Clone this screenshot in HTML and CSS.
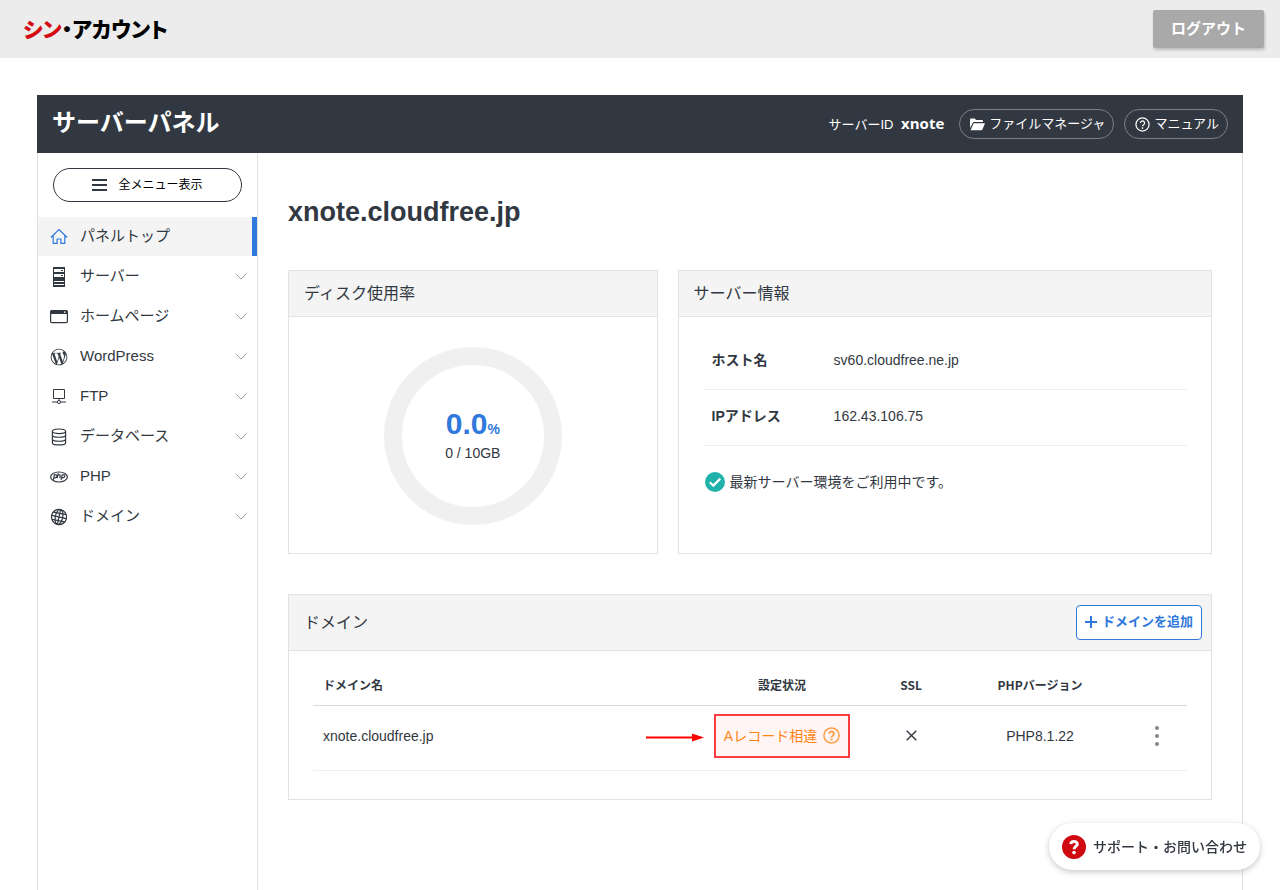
FILE: index.html
```html
<!DOCTYPE html>
<html lang="ja">
<head>
<meta charset="utf-8">
<meta name="viewport" content="width=device-width, initial-scale=1">
<title>サーバーパネル</title>
<link rel="stylesheet" href="styles.css">
</head>
<body>
<header class="site-header">
  <a class="logo" href="#"><span class="logo-accent">シン</span>・アカウント</a>
  <button class="logout" type="button">ログアウト</button>
</header>

<div class="panel">
  <header class="panel-header">
    <h1 class="panel-title">サーバーパネル</h1>
    <div class="panel-tools">
      <p class="server-id">サーバーID <strong>xnote</strong></p>
      <a class="pill" href="#">
        <svg width="15" height="13" viewBox="0 0 15 13" fill="currentColor" aria-hidden="true"><path d="M0 10V1.5Q0 .5 1 .5h3.600l1.500 1.500H12q1 0 1 1V4H4.300Q3 4 2.500 5.200z"/><path d="M.6 12.300 3.300 5.900Q3.600 5.200 4.400 5.200H15l-2.600 6.400q-.3.700-1 .7z"/></svg>
        ファイルマネージャ
      </a>
      <a class="pill" href="#">
        <svg width="15" height="15" viewBox="0 0 24 24" fill="none" stroke="currentColor" stroke-width="2" aria-hidden="true"><circle cx="12" cy="12" r="10.500"/><path d="M8.700 9.600a3.300 3.300 0 1 1 5.200 2.700c-1.200.8-1.900 1.300-1.900 2.500"/><path d="M12 16.500v2.400" stroke-width="2.400"/></svg>
        マニュアル
      </a>
    </div>
  </header>

  <div class="panel-body">
    <aside class="sidebar">
      <button class="all-menu" type="button">
        <svg width="15" height="12" viewBox="0 0 15 12" fill="#323841" aria-hidden="true"><path d="M0 0h15v2H0zM0 5h15v2H0zM0 10h15v2H0z"/></svg>
        全メニュー表示
      </button>
      <nav class="menu">
        <a class="menu-item is-active" href="#">
          <svg class="menu-icon" viewBox="0 0 18 20" fill="none" stroke="#2f78dc" stroke-width="1.200" aria-hidden="true"><path d="M.8 10.500 9 2.500l8.200 8M3.200 9v7.300h3.900v-4.300h3.800v4.300h3.900V9"/></svg>
          <span>パネルトップ</span>
        </a>
        <a class="menu-item" href="#">
          <svg class="menu-icon" viewBox="0 0 18 20" aria-hidden="true"><path fill="#323841" d="M3 0h12v20H3z"/><path fill="#fff" d="M4 2h10v3H4zM4 7h10v3H4zM4 14h10v1H4zM4 17h10v1H4z"/><path fill="#323841" d="M11 3h2v1h-2zM11 8h2v1h-2z"/></svg>
          <span>サーバー</span>
          <svg class="chevron" viewBox="0 0 12 7" aria-hidden="true"><path d="m.7.7 5.300 5.300L11.300.7"/></svg>
        </a>
        <a class="menu-item" href="#">
          <svg class="menu-icon" viewBox="0 0 18 20" aria-hidden="true"><rect x=".6" y="3.600" width="16.800" height="12" rx="1" fill="#fff" stroke="#323841" stroke-width="1.200"/><path fill="#323841" d="M1 3.500h16V7H1z"/><path fill="#fff" d="M14 4.500h1.500v1.300H14z"/></svg>
          <span>ホームページ</span>
          <svg class="chevron" viewBox="0 0 12 7" aria-hidden="true"><path d="m.7.7 5.300 5.300L11.300.7"/></svg>
        </a>
        <a class="menu-item" href="#">
          <svg class="menu-icon" viewBox="-1 -1 26 26" fill="#323841" aria-hidden="true"><path d="M21.469 6.825c.84 1.537 1.318 3.300 1.318 5.175 0 3.979-2.156 7.456-5.363 9.325l3.295-9.527c.615-1.540.82-2.771.82-3.864 0-.405-.026-.78-.07-1.110m-7.981.105c.647-.03 1.232-.105 1.232-.105.582-.075.514-.93-.067-.899 0 0-1.755.135-2.880.135-1.064 0-2.850-.15-2.850-.15-.585-.03-.661.855-.075.885 0 0 .54.061 1.125.09l1.680 4.605-2.370 7.080L5.354 6.900c.649-.03 1.234-.1 1.234-.1.585-.075.516-.93-.065-.896 0 0-1.746.138-2.874.138-.2 0-.438-.008-.69-.015C4.911 3.150 8.235 1.215 12 1.215c2.809 0 5.365 1.072 7.286 2.833-.046-.003-.091-.009-.141-.009-1.060 0-1.812.923-1.812 1.914 0 .89.513 1.643 1.060 2.531.411.72.89 1.643.89 2.977 0 .915-.354 1.994-.821 3.479l-1.075 3.585-3.900-11.610zM12 22.784c-1.059 0-2.081-.153-3.048-.437l3.237-9.406 3.315 9.087c.024.053.05.101.078.149-1.120.393-2.325.609-3.582.609M1.211 12c0-1.564.336-3.050.935-4.390L7.290 21.709C3.694 19.960 1.212 16.271 1.211 12M12 0C5.385 0 0 5.385 0 12s5.385 12 12 12 12-5.385 12-12S18.615 0 12 0"/></svg>
          <span>WordPress</span>
          <svg class="chevron" viewBox="0 0 12 7" aria-hidden="true"><path d="m.7.7 5.300 5.300L11.300.7"/></svg>
        </a>
        <a class="menu-item" href="#">
          <svg class="menu-icon" viewBox="0 0 18 20" fill="none" stroke="#323841" aria-hidden="true"><path d="M3.500 2.500h11v9h-11zM9 11.500v2M2 15h5.300M10.700 15H16"/><circle cx="9" cy="15" r="1.600"/></svg>
          <span>FTP</span>
          <svg class="chevron" viewBox="0 0 12 7" aria-hidden="true"><path d="m.7.7 5.300 5.300L11.300.7"/></svg>
        </a>
        <a class="menu-item" href="#">
          <svg class="menu-icon" viewBox="0 0 18 18" fill="none" stroke="#323841" stroke-width="1.200" aria-hidden="true"><ellipse cx="9" cy="3.300" rx="6.600" ry="2.300"/><path d="M2.400 3.300v11.400c0 3 13.200 3 13.200 0V3.300M2.400 7c0 3 13.200 3 13.200 0M2.400 11c0 3 13.200 3 13.200 0"/></svg>
          <span>データベース</span>
          <svg class="chevron" viewBox="0 0 12 7" aria-hidden="true"><path d="m.7.7 5.300 5.300L11.300.7"/></svg>
        </a>
        <a class="menu-item" href="#">
          <svg class="menu-icon" viewBox="0 0 18 18" fill="none" stroke="#323841" stroke-width="1.200" aria-hidden="true"><ellipse cx="9" cy="9" rx="8.400" ry="5"/><path d="m3.300 11.800 1.200-5h1.400c2 0 1.200 3-1 3H4.200M8.300 5.300 7.200 10M8 6.900h1.400c1 0 .9.600.7 1.400L9.700 10M11 11.800l1.200-5h1.400c2 0 1.200 3-1 3h-.7"/></svg>
          <span>PHP</span>
          <svg class="chevron" viewBox="0 0 12 7" aria-hidden="true"><path d="m.7.7 5.300 5.300L11.300.7"/></svg>
        </a>
        <a class="menu-item" href="#">
          <svg class="menu-icon" viewBox="0 0 18 18" fill="none" stroke="#323841" stroke-width="1.200" aria-hidden="true"><g transform="rotate(12 9 9)"><circle cx="9" cy="9" r="7.600"/><ellipse cx="9" cy="9" rx="3.700" ry="7.600"/><path d="M9 1.500v15M1.500 9h15M2.600 5.300h12.800M2.600 12.700h12.800"/></g></svg>
          <span>ドメイン</span>
          <svg class="chevron" viewBox="0 0 12 7" aria-hidden="true"><path d="m.7.7 5.300 5.300L11.300.7"/></svg>
        </a>
      </nav>
    </aside>

    <main class="content">
      <h2 class="domain-title">xnote.cloudfree.jp</h2>

      <div class="cards">
        <section class="card">
          <h3 class="card-head">ディスク使用率</h3>
          <div class="usage">
            <svg class="usage-ring" viewBox="0 0 178 178" aria-hidden="true"><circle cx="89" cy="89" r="80" fill="none" stroke="#f0f0f0" stroke-width="18"/></svg>
            <div class="usage-label">
              <p class="usage-value">0.0<span class="usage-unit">%</span></p>
              <p class="usage-total">0 / 10GB</p>
            </div>
          </div>
        </section>

        <section class="card">
          <h3 class="card-head">サーバー情報</h3>
          <div class="info">
            <table class="info-table">
              <tr><th scope="row">ホスト名</th><td>sv60.cloudfree.ne.jp</td></tr>
              <tr><th scope="row">IPアドレス</th><td>162.43.106.75</td></tr>
            </table>
            <p class="info-status">
              <svg width="20" height="20" viewBox="0 0 20 20" aria-hidden="true"><circle cx="10" cy="10" r="10" fill="#20b2aa"/><path d="m4.800 10.300 3.500 3.300 7-7" fill="none" stroke="#fff" stroke-width="2.200"/></svg>
              最新サーバー環境をご利用中です。
            </p>
          </div>
        </section>
      </div>

      <section class="card">
        <div class="card-head card-head-tall">
          <h3 class="card-title">ドメイン</h3>
          <button class="add-domain" type="button">
            <svg width="12" height="12" viewBox="0 0 12 12" fill="currentColor" aria-hidden="true"><path d="M5 0h2v5h5v2H7v5H5V7H0V5h5z"/></svg>
            ドメインを追加
          </button>
        </div>
        <div class="domains">
          <table class="domain-table">
            <colgroup><col><col class="col-wide"><col class="col-ssl"><col class="col-wide"><col class="col-menu"></colgroup>
            <thead>
              <tr><th class="col-name" scope="col">ドメイン名</th><th scope="col">設定状況</th><th scope="col">SSL</th><th scope="col">PHPバージョン</th><td></td></tr>
            </thead>
            <tbody>
              <tr>
                <td class="col-name">xnote.cloudfree.jp</td>
                <td>
                  <div class="status">
                    <svg class="status-arrow" width="58" height="9" viewBox="0 0 58 9" aria-hidden="true"><path fill="#f00" d="M0 3.500h46V.5l12 4-12 4v-3H0z"/></svg>
                    <a class="status-link" href="#">Aレコード相違
                      <svg width="17" height="17" viewBox="0 0 24 24" fill="none" stroke="#ffa24d" stroke-width="2.200" aria-hidden="true"><circle cx="12" cy="12" r="10.700"/><path d="M8.700 9.600a3.300 3.300 0 1 1 5.200 2.700c-1.200.8-1.900 1.300-1.900 2.500" stroke-width="2.800"/><path d="M12 16.300v2.700" stroke-width="3"/></svg>
                    </a>
                  </div>
                </td>
                <td><svg class="ssl-icon" width="11" height="11" viewBox="0 0 11 11" role="img" aria-label="未設定"><path d="m.7.7 9.600 9.600M10.300.7.7 10.300" stroke="#323841" stroke-width="1.400"/></svg></td>
                <td>PHP8.1.22</td>
                <td><button class="more" type="button" aria-label="操作"><svg width="4" height="20" viewBox="0 0 4 20" fill="#888" aria-hidden="true"><circle cx="2" cy="2" r="2"/><circle cx="2" cy="10" r="2"/><circle cx="2" cy="18" r="2"/></svg></button></td>
              </tr>
            </tbody>
          </table>
        </div>
      </section>
    </main>
  </div>
</div>

<a class="support" href="#">
  <svg width="24" height="24" viewBox="0 0 24 24" aria-hidden="true"><circle cx="12" cy="12" r="12" fill="#cf0a10"/><path d="M8.800 9.200c.2-3.600 6.600-3.500 6.500-.1-.1 2.300-3.200 2.300-3.200 5.100" fill="none" stroke="#fff" stroke-width="2.900"/><circle cx="12" cy="17.600" r="1.800" fill="#fff"/></svg>
  サポート・お問い合わせ
</a>
</body>
</html>
```

FILE: styles.css
```css
*,
*::before,
*::after {
  box-sizing: border-box;
}

body {
  margin: 0;
  min-height: 100vh;
  display: flex;
  flex-direction: column;
  background: #fff;
  color: #323841;
  font: 14px/20px "Liberation Sans", "Noto Sans CJK JP", sans-serif;
}

h1, h2, h3, p {
  margin: 0;
}

a {
  color: inherit;
  text-decoration: none;
}

button {
  font: inherit;
  color: inherit;
  cursor: pointer;
}

svg {
  display: block;
  flex: none;
}

table {
  width: 100%;
  border-collapse: collapse;
}

/* Site header */
.site-header {
  display: flex;
  align-items: center;
  justify-content: space-between;
  height: 58px;
  padding: 0 16px 0 23px;
  background: #ececec;
}

.logo {
  padding-bottom: 3px;
  color: #000;
  font: 900 21px/30px "Noto Sans CJK JP", sans-serif;
  font-feature-settings: "palt";
}

.logo-accent {
  color: #d40a12;
}

.logout {
  height: 38px;
  padding: 0 18px;
  border: 0;
  border-radius: 2px;
  background: #a9a9a9;
  box-shadow: 1px 2px 3px rgba(0, 0, 0, 0.2);
  color: #fff;
  font-size: 15px;
  font-weight: 700;
}

/* Panel frame */
.panel {
  flex: 1;
  display: flex;
  flex-direction: column;
  margin: 37px 37px 0;
}

.panel-header {
  display: flex;
  align-items: center;
  justify-content: space-between;
  height: 58px;
  padding: 0 15px;
  background: #323841;
  color: #fff;
}

.panel-title {
  padding-bottom: 2px;
  font-size: 24px;
  line-height: 32px;
}

.panel-tools {
  display: flex;
  align-items: center;
  gap: 10px;
  font-size: 13px;
}

.server-id {
  margin-right: 5px;
}

.server-id strong {
  margin-left: 4px;
  font-family: "Open Sans", sans-serif;
  font-size: 15px;
}

.pill {
  display: flex;
  align-items: center;
  gap: 4px;
  height: 30px;
  padding: 0 8px 0 10px;
  border: 1px solid #7c8087;
  border-radius: 15px;
}

.panel-body {
  flex: 1;
  display: flex;
  border: solid #e2e2e2;
  border-width: 0 1px;
}

/* Sidebar */
.sidebar {
  flex: none;
  width: 220px;
  padding-top: 15px;
  border-right: 1px solid #e2e2e2;
}

.all-menu {
  display: flex;
  align-items: center;
  justify-content: center;
  gap: 11px;
  width: 189px;
  height: 34px;
  margin: 0 15px 15px;
  padding: 0;
  border: 1px solid #323841;
  border-radius: 17px;
  background: #fff;
  color: #000;
  font-size: 12px;
}

.menu {
  display: grid;
  gap: 1px;
}

.menu-item {
  display: flex;
  align-items: center;
  gap: 12px;
  height: 39px;
  padding: 0 10px 0 12px;
  font-size: 15px;
}

.menu-item span {
  padding-bottom: 2px;
}

.menu-item.is-active {
  border-right: 5px solid #2f78dc;
  background: #f4f4f4;
}

.menu-icon {
  width: 18px;
  height: 20px;
}

.chevron {
  width: 12px;
  height: 7px;
  margin-left: auto;
  fill: none;
  stroke: #a0a0a0;
}

/* Content */
.content {
  flex: 1;
  min-width: 0;
  padding: 43px 30px 90px;
}

.domain-title {
  margin-bottom: 42px;
  font-size: 27px;
  line-height: 32px;
}

.cards {
  display: grid;
  grid-template-columns: 40% 1fr;
  gap: 20px;
  margin-bottom: 40px;
}

.card {
  border: 1px solid #e2e2e2;
}

.card-head {
  display: flex;
  align-items: center;
  justify-content: space-between;
  height: 46px;
  padding: 0 9px 0 15px;
  border-bottom: 1px solid #e2e2e2;
  background: #f4f4f4;
  font-size: 16px;
  font-weight: 400;
}

.card-head-tall {
  height: 56px;
}

.card-title {
  font-size: 16px;
  font-weight: 400;
}

/* Disk usage */
.usage {
  display: grid;
  place-items: center;
  padding: 30px 0 28px;
}

.usage > * {
  grid-area: 1 / 1;
}

.usage-ring {
  width: 178px;
  height: 178px;
}

.usage-label {
  padding-bottom: 4px;
  text-align: center;
}

.usage-value {
  color: #2f78dc;
  font-size: 30px;
  font-weight: 700;
  line-height: 38px;
}

.usage-unit {
  font-size: 14px;
  line-height: 14px;
}

/* Server information */
.info {
  padding: 16px 24px 24px 25px;
}

.info-table th,
.info-table td {
  height: 56px;
  padding: 0 8px 2px;
  border-bottom: 1px solid #eee;
  text-align: left;
}

.info-table th {
  width: 122px;
}

.info-status {
  display: flex;
  align-items: center;
  gap: 5px;
  margin: 26px 0 0 1px;
}

/* Domain list */
.add-domain {
  display: flex;
  align-items: center;
  gap: 5px;
  height: 35px;
  padding: 0 8px 1px;
  border: 1px solid #2f78dc;
  border-radius: 4px;
  background: #fff;
  color: #2f78dc;
  font-size: 13px;
  font-weight: 700;
}

.domains {
  padding: 15px 24px 28px;
}

.domain-table {
  table-layout: fixed;
}

.domain-table th,
.domain-table td {
  padding: 0;
  text-align: center;
}

.domain-table th {
  height: 39px;
  font: 700 12px/20px "Noto Sans CJK JP", sans-serif;
}

.domain-table thead tr {
  border-bottom: 1px solid #d9d9d9;
}

.domain-table tbody td {
  height: 65px;
  padding-bottom: 4px;
  border-bottom: 1px solid #eee;
}

.domain-table .col-name {
  padding-left: 10px;
  text-align: left;
}

.col-wide {
  width: 174px;
}

.col-ssl {
  width: 84px;
}

.col-menu {
  width: 60px;
}

.status {
  position: relative;
  display: inline-block;
  vertical-align: middle;
}

.status-link {
  display: flex;
  align-items: center;
  gap: 6px;
  height: 44px;
  padding: 0 8px;
  border: 2px solid #fb3c3c;
  background: #fff5f5;
  color: #ff8413;
}

.status-arrow {
  position: absolute;
  top: 19px;
  right: calc(100% + 10px);
}

.ssl-icon {
  margin: 0 auto;
}

.more {
  padding: 6px 12px;
  border: 0;
  background: none;
  vertical-align: middle;
}

/* Floating support link */
.support {
  position: fixed;
  right: 20px;
  bottom: 20px;
  display: flex;
  align-items: center;
  gap: 7px;
  height: 47px;
  padding: 0 13px;
  border-radius: 24px;
  background: #fff;
  box-shadow: 0 2px 6px rgba(0, 0, 0, 0.22);
  font-weight: 500;
}
```
